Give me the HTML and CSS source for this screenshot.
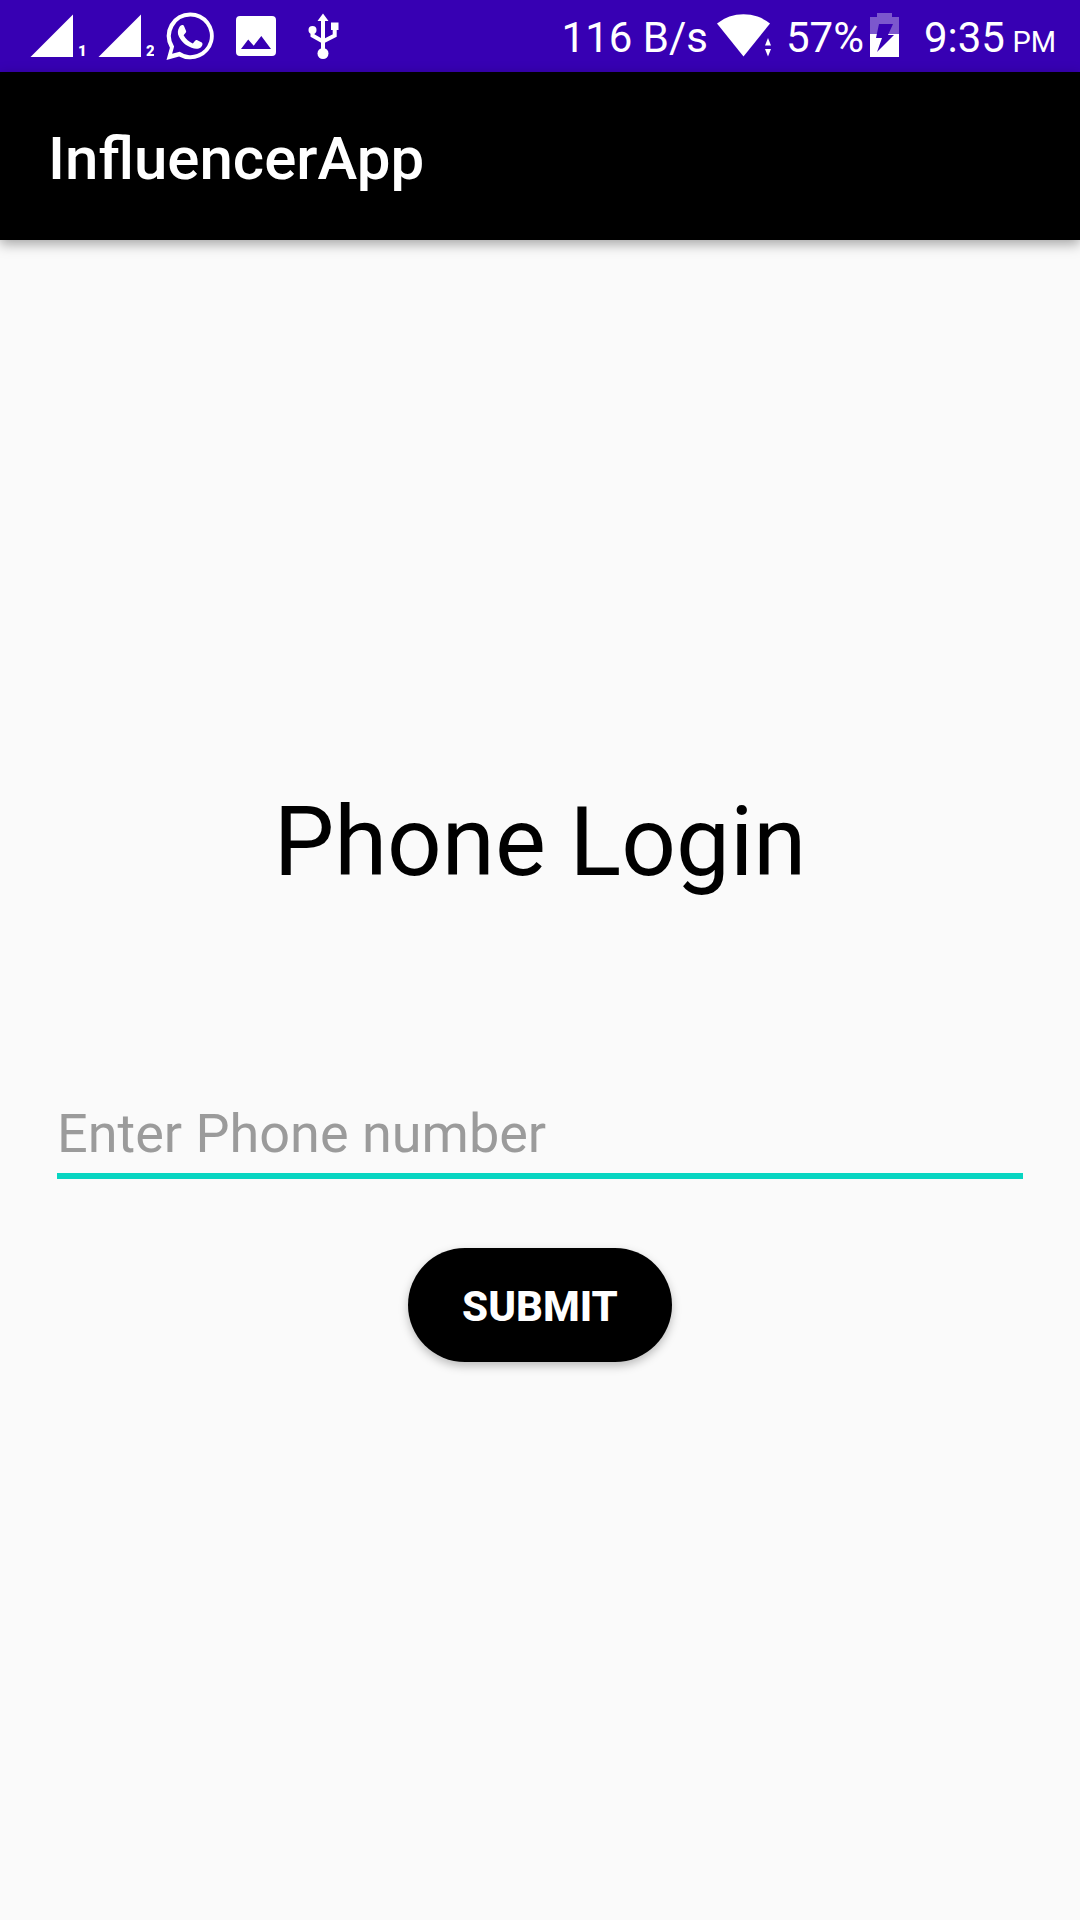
FILE: index.html
```html
<!DOCTYPE html>
<html lang="en">
<head>
  <meta charset="utf-8">
  <meta name="viewport" content="width=device-width, initial-scale=1">
  <title>InfluencerApp</title>
  <link rel="stylesheet" href="styles.css">
</head>
<body>
  <div class="status-bar">
    <div class="status-group status-left">
      <svg class="icon" width="56" height="48" viewBox="30 12 56 48" role="img" aria-label="SIM 1 signal">
        <path d="M30.500 57L73 14.500V57z"/>
        <text class="sim" x="78" y="56">1</text>
      </svg>
      <svg class="icon" width="56" height="48" viewBox="30 12 56 48" role="img" aria-label="SIM 2 signal">
        <path d="M30.500 57L73 14.500V57z"/>
        <text class="sim" x="78" y="56">2</text>
      </svg>
      <svg class="icon" width="48" height="48" viewBox="166 12 48 48" role="img" aria-label="WhatsApp">
        <path fill-rule="evenodd" d="M190.300 12.500a23.400 23.400 0 1 1-11.200 43.900L166.500 60l3.400-12.200a23.400 23.400 0 0 1 20.400-35.300zm0 4.100a19.300 19.300 0 0 0-16.200 29.800l-2 7.400 7.600-2a19.300 19.300 0 1 0 10.600-35.200z"/>
        <path d="M181.500 25.200c1.200-.3 2.200 0 2.700 1.200l1.900 4.600c.3.900-.1 1.600-2.500 4.300 2.300 4 5.300 6.500 9.200 8.200 2.500-3 3-3.900 4.100-3.400l4.900 2.400c1 .5 1.100 3.100-.8 4.700-2.500 2-5.800 2-9.400.6-6-2.300-9.600-5.700-12.600-11-1.800-3.400-1.400-7.200.5-9.900.6-.9 1.300-1.600 2-1.700z"/>
      </svg>
      <svg class="icon" width="40" height="48" viewBox="236 12 40 48" role="img" aria-label="Image saved">
        <path fill-rule="evenodd" d="M240 16h32a4 4 0 0 1 4 4v32a4 4 0 0 1-4 4h-32a4 4 0 0 1-4-4V20a4 4 0 0 1 4-4zm8.200 23.500L241 49h30l-9.700-13-7.600 9.700z"/>
      </svg>
      <svg class="icon" width="32" height="48" viewBox="308 12 32 48" role="img" aria-label="USB connected">
        <path d="M323 13.500l5.500 7.500h-11zM331 22.500h7.500V30H331z"/>
        <circle cx="312.500" cy="30" r="4"/>
        <circle cx="323" cy="53.500" r="5.500"/>
        <path class="wire" d="M323 20v32M312.500 30v5.500l10.500 6M334.700 29v6.500L323 41.500"/>
      </svg>
    </div>
    <div class="status-group">
      <span class="speed">116 B/s</span>
      <svg class="icon wifi" width="56" height="48" viewBox="716 12 56 48" role="img" aria-label="Wi-Fi">
        <path d="M743.500 56.500L717 23.500a42.500 42.500 0 0 1 53 0z"/>
        <path class="cut" d="M763.500 36h9v22h-9z"/>
        <path d="M768 38l3 7.500h-6zM765 49h6l-3 7.500z"/>
      </svg>
      <span>57%</span>
      <svg class="icon battery" width="30" height="48" viewBox="871 12 30 48" role="img" aria-label="Charging">
        <path class="dim" d="M878 13h15v4h7v17h-29V17h7z"/>
        <path d="M871 34h29v23h-29z"/>
        <path class="cut" d="M880 24h14l-5 11h6l-17 17 5-14h-6z"/>
      </svg>
      <time class="clock" datetime="21:35">9:35 <small>PM</small></time>
    </div>
  </div>
  <header class="app-bar">
    <span class="app-title">InfluencerApp</span>
  </header>
  <main class="login">
    <h1 class="heading">Phone Login</h1>
    <form class="form">
      <input class="phone" type="tel" name="phone" placeholder="Enter Phone number" aria-label="Phone number">
      <button class="submit" type="submit">SUBMIT</button>
    </form>
  </main>
</body>
</html>
```

FILE: styles.css
```css
* {
  box-sizing: border-box;
}

body {
  display: flex;
  flex-direction: column;
  min-height: 100vh;
  margin: 0;
  background: #fafafa;
  color: #000;
  font-family: Roboto, "Liberation Sans", sans-serif;
}

.status-bar {
  display: flex;
  justify-content: space-between;
  align-items: center;
  height: 72px;
  padding: 0 24px 0 30px;
  background: #3700b3;
  color: #fff;
  font-size: 42px;
  line-height: 48px;
  white-space: nowrap;
}

.status-group {
  display: flex;
  align-items: center;
}

.status-group span,
.clock {
  padding-top: 4px;
}

.status-left {
  gap: 12px;
}

.status-left .icon:nth-child(n + 4) {
  margin-left: 10px;
}

.status-left .icon:nth-child(5) {
  margin-left: 20px;
}

.icon {
  flex: none;
  fill: #fff;
}

.sim {
  font-size: 15px;
  font-weight: 900;
}

.wire {
  fill: none;
  stroke: #fff;
  stroke-width: 4;
}

.cut {
  fill: #3700b3;
}

.dim {
  fill: #7c57cd;
}

.wifi {
  margin: 0 14px 0 8px;
}

.battery {
  margin: 0 24px 0 6px;
}

.clock small {
  margin-left: -3px;
  font-size: 29px;
  line-height: 1;
}

.app-bar {
  display: flex;
  align-items: center;
  height: 168px;
  padding: 6px 48px 0;
  background: #000;
  color: #fff;
  box-shadow: 0 4px 12px rgba(0, 0, 0, 0.35);
}

.app-title {
  font-size: 60px;
  font-weight: 500;
  line-height: 72px;
}

.login {
  display: flex;
  flex: 1;
  flex-direction: column;
  justify-content: center;
  padding: 24px 57px 36px;
}

.heading {
  margin: 0 0 188px;
  font-size: 96px;
  font-weight: 400;
  line-height: 112px;
  text-align: center;
}

.form {
  display: flex;
  flex-direction: column;
  align-items: center;
  gap: 69px;
}

.phone {
  width: 100%;
  height: 93px;
  padding: 8px 0 0;
  border: 0;
  border-bottom: 6px solid #08d5c1;
  border-radius: 0;
  outline: 0;
  background: transparent;
  color: #000;
  font: inherit;
  font-size: 54px;
}

.phone::placeholder {
  color: #9b9b9b;
  opacity: 1;
}

.submit {
  min-width: 264px;
  height: 114px;
  padding: 2px 48px 0;
  border: 0;
  border-radius: 57px;
  background: #000;
  color: #fff;
  box-shadow: 0 4px 10px rgba(0, 0, 0, 0.25);
  font: inherit;
  font-size: 42px;
  font-weight: 800;
}
```
